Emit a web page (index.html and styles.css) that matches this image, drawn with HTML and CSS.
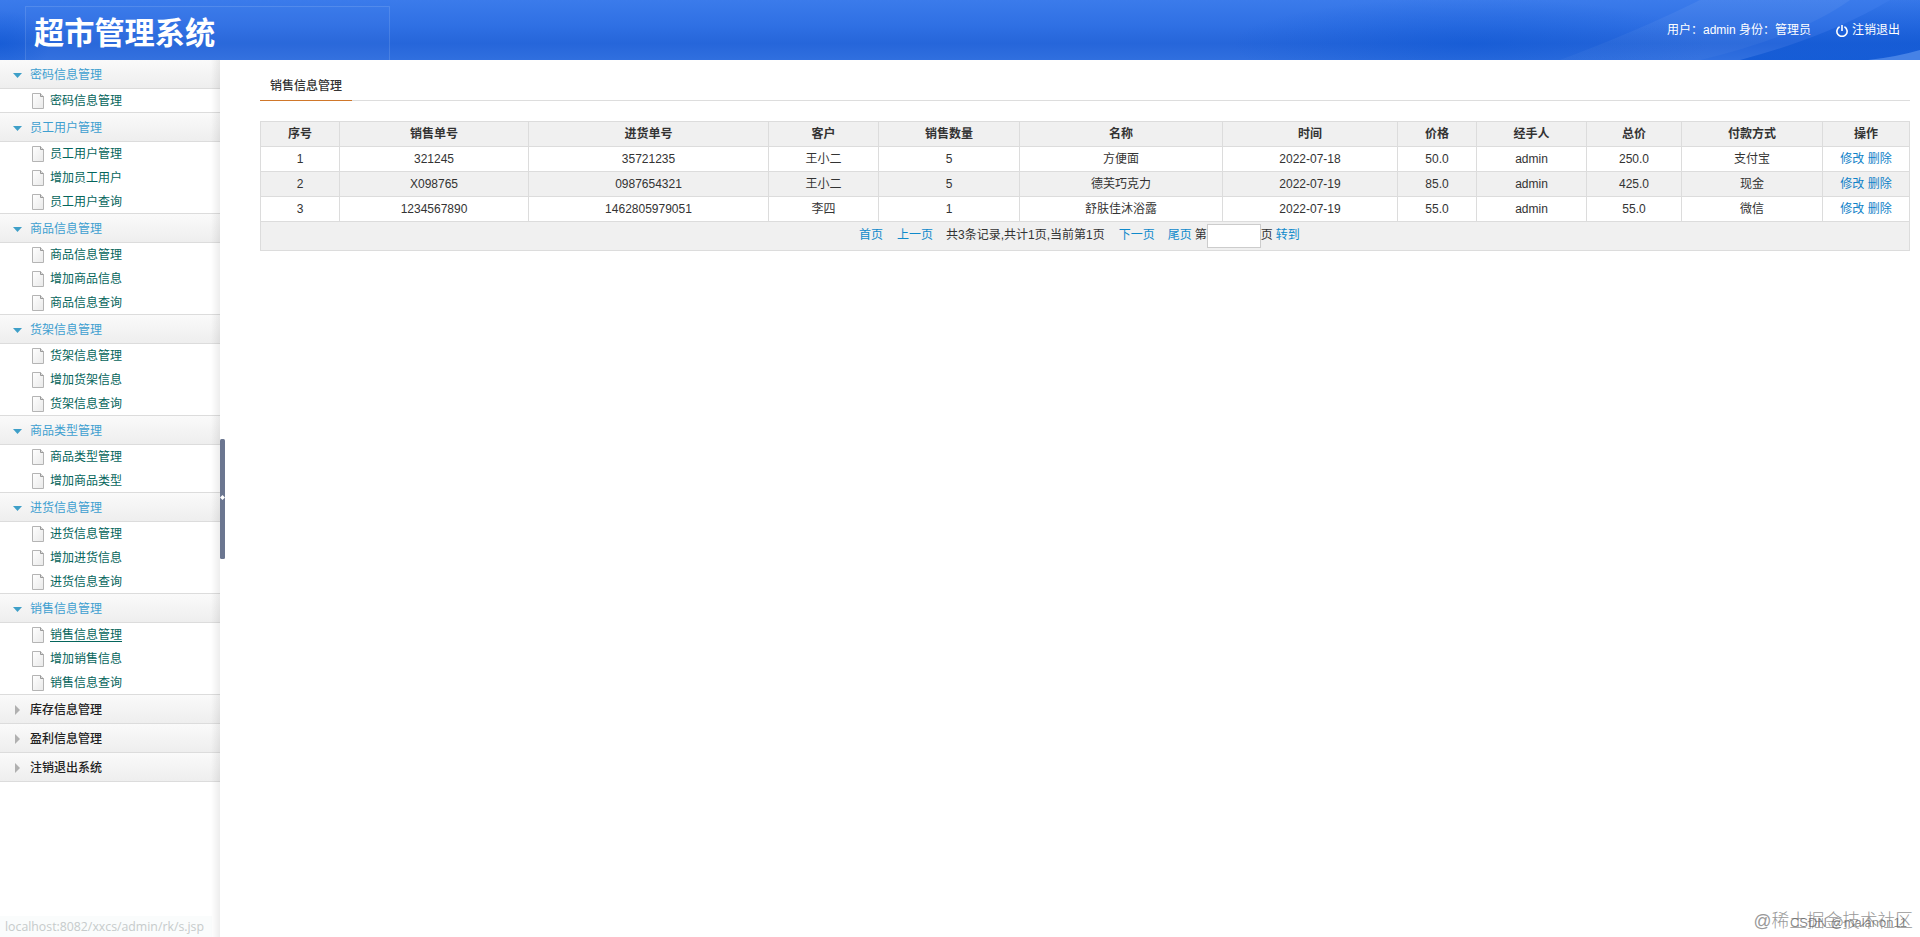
FILE: index.html
```
<!DOCTYPE html>
<html lang="zh-CN">
<head>
<meta charset="utf-8">
<title>超市管理系统</title>
<link rel="stylesheet" href="styles.css">
</head>
<body>
<svg class="defs" aria-hidden="true">
<defs>
<linearGradient id="paper" x1="0" y1="0" x2="1" y2="1"><stop offset="0" stop-color="#fff"/><stop offset="1" stop-color="#e9e9e9"/></linearGradient>
<symbol id="doc" viewBox="0 0 12 16"><path d="M.5 .5h8l3 3v12H.5z" fill="url(#paper)" stroke="#b4b4b4"/><path d="M8.500 .5v3h3" fill="#ddd" stroke="#999"/></symbol>
</defs>
</svg>
<header class="top">
<svg class="top-art" viewBox="0 0 1920 60" preserveAspectRatio="none">
<defs>
<linearGradient id="hl" x1="0" y1="0" x2="0" y2="1"><stop offset="0" stop-color="#fff" stop-opacity=".06"/><stop offset="1" stop-color="#fff" stop-opacity=".03"/></linearGradient>
<linearGradient id="sweep" x1="0" y1="0" x2="0" y2="1"><stop offset="0" stop-color="#0450d0" stop-opacity=".08"/><stop offset="1" stop-color="#0450d0" stop-opacity=".6"/></linearGradient>
<radialGradient id="dk"><stop offset="0" stop-color="#0450d0" stop-opacity=".4"/><stop offset="1" stop-color="#0450d0" stop-opacity="0"/></radialGradient>
</defs>
<ellipse cx="0" cy="44" rx="50" ry="34" fill="url(#dk)"/>
<ellipse cx="1470" cy="44" rx="240" ry="46" fill="url(#dk)"/>
<path d="M1700 60Q1800 36 1850 0H1700Q1640 30 1560 60z" fill="url(#hl)"/>
<path d="M1740 60Q1830 36 1890 0H1920V60z" fill="url(#sweep)"/>
<path d="M1868 60Q1896 57 1920 50V60z" fill="#4682e6"/>
<path d="M25.500 60V6.500H389.500V60" fill="#fff" fill-opacity=".02" stroke="#fff" stroke-opacity=".13"/>
</svg>
<h1 class="brand">超市管理系统</h1>
<div class="account">
<span>用户：admin 身份：管理员</span>
<a class="logout"><svg width="12" height="12" viewBox="0 0 12 12" fill="none" stroke="#fff" stroke-width="1.600"><path d="M3.600 1.800a5.100 5.100 0 1 0 4.800 0M6 0v6"/></svg>注销退出</a>
</div>
</header>
<div class="main">
<nav class="side">
<h2 class="open">密码信息管理</h2>
<ul><li><svg><use href="#doc"/></svg>密码信息管理</li></ul>
<h2 class="open">员工用户管理</h2>
<ul><li><svg><use href="#doc"/></svg>员工用户管理</li><li><svg><use href="#doc"/></svg>增加员工用户</li><li><svg><use href="#doc"/></svg>员工用户查询</li></ul>
<h2 class="open">商品信息管理</h2>
<ul><li><svg><use href="#doc"/></svg>商品信息管理</li><li><svg><use href="#doc"/></svg>增加商品信息</li><li><svg><use href="#doc"/></svg>商品信息查询</li></ul>
<h2 class="open">货架信息管理</h2>
<ul><li><svg><use href="#doc"/></svg>货架信息管理</li><li><svg><use href="#doc"/></svg>增加货架信息</li><li><svg><use href="#doc"/></svg>货架信息查询</li></ul>
<h2 class="open">商品类型管理</h2>
<ul><li><svg><use href="#doc"/></svg>商品类型管理</li><li><svg><use href="#doc"/></svg>增加商品类型</li></ul>
<h2 class="open">进货信息管理</h2>
<ul><li><svg><use href="#doc"/></svg>进货信息管理</li><li><svg><use href="#doc"/></svg>增加进货信息</li><li><svg><use href="#doc"/></svg>进货信息查询</li></ul>
<h2 class="open">销售信息管理</h2>
<ul><li><svg><use href="#doc"/></svg><span class="current">销售信息管理</span></li><li><svg><use href="#doc"/></svg>增加销售信息</li><li><svg><use href="#doc"/></svg>销售信息查询</li></ul>
<h2>库存信息管理</h2>
<h2>盈利信息管理</h2>
<h2 class="last">注销退出系统</h2>
<div class="status">localhost:8082/xxcs/admin/rk/s.jsp</div>
</nav>
<div class="splitter"><svg width="5" height="120" viewBox="0 0 5 120"><rect width="5" height="120" rx="1.500" fill="#6b7690"/><path d="M2.500 56L5 58.500 2.500 61 0 58.500z" fill="#fff"/></svg></div>
<main class="content">
<div class="tabs"><span class="tab">销售信息管理</span></div>
<table>
<colgroup><col class="c1"><col class="c2"><col class="c3"><col class="c4"><col class="c5"><col class="c6"><col class="c7"><col class="c8"><col class="c9"><col class="c10"><col class="c11"><col class="c12"></colgroup>
<tr><th>序号</th><th>销售单号</th><th>进货单号</th><th>客户</th><th>销售数量</th><th>名称</th><th>时间</th><th>价格</th><th>经手人</th><th>总价</th><th>付款方式</th><th>操作</th></tr>
<tr><td>1</td><td>321245</td><td>35721235</td><td>王小二</td><td>5</td><td>方便面</td><td>2022-07-18</td><td>50.0</td><td>admin</td><td>250.0</td><td>支付宝</td><td><a>修改</a> <a>删除</a></td></tr>
<tr class="alt"><td>2</td><td>X098765</td><td>0987654321</td><td>王小二</td><td>5</td><td>德芙巧克力</td><td>2022-07-19</td><td>85.0</td><td>admin</td><td>425.0</td><td>现金</td><td><a>修改</a> <a>删除</a></td></tr>
<tr><td>3</td><td>1234567890</td><td>1462805979051</td><td>李四</td><td>1</td><td>舒肤佳沐浴露</td><td>2022-07-19</td><td>55.0</td><td>admin</td><td>55.0</td><td>微信</td><td><a>修改</a> <a>删除</a></td></tr>
<tr class="alt pager"><td colspan="12"><div class="pages"><a class="first">首页</a><a class="prev">上一页</a><span class="sum">共3条记录,共计1页,当前第1页</span><a class="next">下一页</a><a class="end">尾页</a><span>第</span><input type="text"><span class="unit">页</span><a>转到</a></div></td></tr>
</table>
</main>
</div>
<div class="mark mark-a">@稀土掘金技术社区</div>
<div class="mark mark-b">CSDN @malanon11</div>
</body>
</html>
```
FILE: styles.css
```
* { box-sizing: border-box; }
body { margin: 0; height: 937px; overflow: hidden; display: flex; flex-direction: column; background: #fff; color: #333; font: 12px/18px "Liberation Sans", "Noto Sans CJK SC", sans-serif; }
.defs { position: absolute; width: 0; height: 0; }
h1, h2, ul { margin: 0; padding: 0; list-style: none; }

.top { position: relative; height: 60px; flex: none; display: flex; justify-content: space-between; align-items: center; padding: 0 20px 0 34px; color: #fff; background: linear-gradient(#3b7beb, #2f70e4 42%, #2666da 72%, #306fdf); }
.top-art { position: absolute; inset: 0; width: 100%; height: 60px; }
.brand { position: relative; font-size: 30.200px; line-height: 44px; padding-top: 7px; }
.account { position: relative; display: flex; gap: 25px; }
.logout { display: flex; align-items: center; gap: 4px; }
.logout svg { margin-top: 2px; }

.main { flex: 1; display: flex; min-height: 0; }
.side { position: relative; width: 220px; flex: none; display: flex; flex-direction: column; }
.side::after { content: ""; position: absolute; top: 0; right: 0; bottom: 0; width: 9px; background: linear-gradient(90deg, rgba(0,0,0,0), rgba(0,0,0,.07)); }
.side h2 { height: 29px; padding-top: 2px; border-top: 1px solid #dcdcdc; background: linear-gradient(#fafafa, #eee); font-size: 12px; line-height: 26px; font-weight: 500; color: #222; display: flex; align-items: center; }
.side h2:first-child { height: 28px; border-top: 0; }
.side h2::before { content: ""; width: 5px; height: 10px; margin: 0 10px 0 15px; background: #b0b0b0; clip-path: polygon(0 0, 100% 50%, 0 100%); }
.side h2.open { color: #3e9fd0; font-weight: 400; }
.side h2.open::before { width: 9px; height: 5px; margin: 1px 8px 0 13px; background: #3e9fc8; clip-path: polygon(0 0, 100% 0, 50% 100%); }
.side h2.last { height: 30px; border-bottom: 1px solid #dcdcdc; }
.side ul { border-top: 1px solid #dcdcdc; }
.side li { height: 24px; display: flex; align-items: center; gap: 6px; padding: 1px 0 0 32px; color: #05655c; }
.side li:first-child { height: 23px; padding-top: 0; }
.side li svg { width: 12px; height: 16px; }
.current { text-decoration: underline; text-underline-offset: 2px; }
.status { margin-top: auto; width: 212px; height: 21px; padding-left: 5px; background: #fafcfc; color: #c6cbcb; font: 12.300px/21px "Open Sans", sans-serif; white-space: nowrap; }

.splitter { width: 5px; flex: none; padding-top: 379px; }
.splitter svg { display: block; }
.content { flex: 1; padding: 10px 10px 0 35px; }
.tabs { height: 31px; border-bottom: 1px solid #ddd; margin-bottom: 20px; }
.tab { display: block; width: 92px; height: 31px; line-height: 32px; text-align: center; font-weight: 500; border-bottom: 1px solid #d0772a; }
table { width: 1650px; table-layout: fixed; border-collapse: collapse; }
th, td { height: 25px; padding: 0; border: 1px solid #dcdcdc; text-align: center; line-height: 18px; }
th { color: #333; font-weight: bold; }
tr:first-child, .alt { background: #f0f0f0; }
td a { color: #1082c8; }
.pager td { height: 29px; }
.pages { height: 28px; display: flex; align-items: center; padding: 0 0 2px 598px; white-space: nowrap; }
.pages a { color: #0f8acb; }
.first { margin-right: 14px; }
.prev { margin-right: 13px; }
.sum { margin-right: 14px; }
.next { margin-right: 13px; }
.end { margin-right: 3px; }
.pages input { width: 54px; height: 24px; margin: 2px 0 0; padding: 0; border: 1px solid #ccc; background: #fff; }
.unit { margin-right: 3px; }
.c1 { width: 79px; }
.c2 { width: 189px; }
.c3 { width: 240px; }
.c4 { width: 110px; }
.c5 { width: 141px; }
.c6 { width: 203px; }
.c7 { width: 175px; }
.c8 { width: 79px; }
.c9 { width: 110px; }
.c10 { width: 95px; }
.c11 { width: 141px; }
.c12 { width: 87px; }

.mark { position: absolute; white-space: nowrap; }
.mark-a { right: 7px; bottom: 4px; font-size: 17.700px; line-height: 24px; color: #999; font-weight: 300; }
.mark-b { right: 13px; bottom: 4px; font-size: 13px; line-height: 20px; color: rgba(90,90,90,.7); }
```
